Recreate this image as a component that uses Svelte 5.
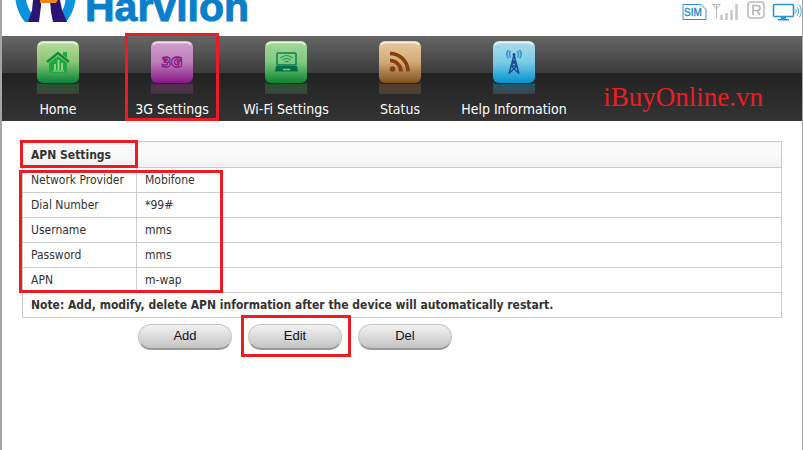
<script>
  const nav = [
    { id: 'home', label: 'Home', top: '#b8de9c', mid: '#8cc576', low: '#07843a' },
    { id: 'network', label: '3G Settings', top: '#d0a0ce', mid: '#bd7fba', low: '#861884', marked: true },
    { id: 'wifi', label: 'Wi-Fi Settings', top: '#a8d898', mid: '#7fc983', low: '#0d8430' },
    { id: 'status', label: 'Status', top: '#e8c9a0', mid: '#d2aa78', low: '#80501c' },
    { id: 'help', label: 'Help Information', top: '#b0dcea', mid: '#7accE6', low: '#0493cc' }
  ];
  const rows = [
    ['Network Provider', 'Mobifone'],
    ['Dial Number', '*99#'],
    ['Username', 'mms'],
    ['Password', 'mms'],
    ['APN', 'm-wap']
  ];
</script>

<div class="page">
  <header>
    <div class="brand">
      <svg width="62" height="22" viewBox="15 0 62 22" aria-hidden="true">
        <path d="M15.500 0C17 9 20 16 25 22H32V14C29 10 27 5 26 0Z" fill="#0a93dc" />
        <path d="M75.500 0C74 9 71 16 66 22H60V14C63 10 65 5 65.500 0Z" fill="#0a93dc" />
        <path d="M33 0H41V6L39 22H28L32 10Z" fill="#2a1574" />
        <path d="M50 0H60L62 10L67 22H53L51 12Z" fill="#2a1574" />
        <path d="M40 0H58L56 3H40Z" fill="#f08220" />
      </svg>
      <span class="name">Harvilon</span>
    </div>
    <svg class="signals" width="120" height="22" viewBox="0 0 120 22" fill="none" role="img" aria-label="Device signals">
      <path d="M1 4.500H19L24 9.500V19.500H1Z" stroke="#2b95d3" />
      <text x="2" y="16" font-size="10" font-family="Liberation Sans" fill="#1b86c8" stroke="#1b86c8" stroke-width=".3">SIM</text>
      <g stroke="#b9b9b9">
        <path d="M30.500 4.500H38.500L34.500 9ZM34.500 4.500V18" />
        <path d="M39.500 15V20M44.500 13V20M49.500 10V20M54.500 4V20" stroke-width="2.500" stroke="#c6c6c6" />
      </g>
      <rect x="66" y="2" width="16" height="16" rx="3" stroke="#bcbcbc" stroke-width="1.600" />
      <path d="M71 15V5.500H75.500Q78 5.500 78 8T75.500 10.500H71M75 10.500L78 15" stroke="#b4b4b4" stroke-width="1.600" />
      <rect x="91.500" y="4.500" width="20" height="12" rx="1" stroke="#2a95d6" stroke-width="1.600" />
      <path d="M99 17H104V19H107V20.500H96V19H99Z" fill="#2a95d6" />
      <path d="M113.500 9Q115 11 113.500 13.500M115.500 7Q118 11 115.500 15.500M117.500 5Q121 11 117.500 17.500" stroke="#4ba6dc" />
    </svg>
  </header>

  <nav>
    <ul>
      {#each nav as n}
        <li>
          <a href="#{n.id}">
            <svg width="44" height="54" viewBox="0 0 44 54" aria-hidden="true">
              <defs>
                <linearGradient id="tile-{n.id}" x2="0" y2="1">
                  <stop stop-color={n.top} />
                  <stop offset=".5" stop-color={n.mid} />
                  <stop offset="1" stop-color={n.low} />
                </linearGradient>
                <linearGradient id="fade-{n.id}" x2="0" y2="1">
                  <stop stop-color={n.low} stop-opacity=".45" />
                  <stop offset="1" stop-color={n.mid} stop-opacity=".15" />
                </linearGradient>
              </defs>
              <path d="M1 42Q2 44 7 44H37Q42 44 43 42V54H1Z" fill="url(#fade-{n.id})" />
              <rect x="1" y="1" width="42" height="42" rx="6" fill="url(#tile-{n.id})" />
              <path d="M3 5Q4 2.500 8 2.500H36Q40 2.500 41 5" fill="none" stroke="#fff" stroke-opacity=".75" stroke-width="1.500" />
              {#if n.id === 'home'}
                <path d="M11 22L22 13L33 22" fill="none" stroke="#128a3c" stroke-width="2.500" />
                <path d="M27 12H31V18L27 15ZM13 23L22 16L31 23V31Q31 33 29 33H15Q13 33 13 31Z" fill="#1fa83f" />
                <path d="M19 30V24M22.500 30V20M26 30V23" stroke="#9ad88a" stroke-width="1.800" />
                <path d="M17 31H28" stroke="#9ad88a" />
              {:else if n.id === 'network'}
                <text x="22" y="27" text-anchor="middle" font-family="DejaVu Sans" font-weight="bold" font-size="14" fill="#c48ac2" stroke="#86187f" stroke-width="1.300">3G</text>
              {:else if n.id === 'wifi'}
                <rect x="13" y="13" width="19" height="12" rx="1" fill="none" stroke="#0a8050" stroke-width="1.500" />
                <path d="M12 26H33L34 31.500H11Z" fill="#04704a" />
                <path d="M19 29.500H26" stroke="#7fc983" stroke-width="1.500" />
                <path d="M16.500 18Q22.500 13 28.500 18M18.500 20Q22.500 17 26.500 20M20.500 22Q22.500 20.500 24.500 22" fill="none" stroke="#1a935a" stroke-width="1.200" />
              {:else if n.id === 'status'}
                <circle cx="14.500" cy="29" r="2.800" fill="#84400c" />
                <path d="M12 20.500A11 11 0 0 1 23 31.500M12 13.500A18 18 0 0 1 30 31.500" fill="none" stroke="#84400c" stroke-width="3.600" />
              {:else}
                <path d="M22 15L17 34M22 15L27 34M20.500 20L25 26L17.500 33M23.500 20L19 26L26.500 33M19 26H25" fill="none" stroke="#174f90" stroke-width="1.500" />
                <circle cx="22" cy="14.500" r="1.500" fill="#174f90" />
                <path d="M18.500 11Q16.500 14 18.500 17.500M25.500 11Q27.500 14 25.500 17.500M16.500 10Q13 14 16.500 18.500M27.500 10Q31 14 27.500 18.500" fill="none" stroke="#3593c8" stroke-width="1.600" />
                <path d="M18 53L22 50L26 53" fill="none" stroke="#174f90" stroke-opacity=".5" />
              {/if}
            </svg>
            <span>{n.label}</span>
          </a>
          {#if n.marked}<i class="frame frame-nav"></i>{/if}
        </li>
      {/each}
    </ul>
    <span class="mark">iBuyOnline.vn</span>
  </nav>

  <main>
    <table>
      <thead>
        <tr><th class="key">APN Settings</th><th></th></tr>
      </thead>
      <tbody>
        {#each rows as [key, value]}
          <tr><td class="key">{key}</td><td>{value}</td></tr>
        {/each}
        <tr><td colspan="2" class="note">Note: Add, modify, delete APN information after the device will automatically restart.</td></tr>
      </tbody>
    </table>
    <i class="frame frame-title"></i>
    <i class="frame frame-rows"></i>
    <div class="actions">
      <button type="button">Add</button>
      <div class="marked">
        <button type="button">Edit</button>
        <i class="frame frame-edit"></i>
      </div>
      <button type="button">Del</button>
    </div>
  </main>
</div>

<style>
  .page {
    box-sizing: border-box;
    min-height: 100vh;
    border-left: 2px solid #a5a5a5;
    border-right: 1px solid #a5a5a5;
    background: #fff;
    color: #333;
    font: 12px/16px 'DejaVu Sans Condensed', 'DejaVu Sans', sans-serif;
  }
  header {
    display: flex;
    justify-content: space-between;
    height: 36px;
    overflow: hidden;
  }
  .brand {
    display: flex;
    gap: 8px;
    padding-left: 13px;
  }
  .name {
    color: #0a7fc9;
    font: bold 41px/14px 'Liberation Sans', sans-serif;
    -webkit-text-stroke: 1px #0a7fc9;
  }
  .signals { flex: none; }

  nav {
    display: flex;
    justify-content: space-between;
    height: 85px;
    background: linear-gradient(#666, #3c3c3c 43%, #222 44%, #333);
  }
  ul {
    display: flex;
    gap: 2px;
    margin: 0;
    padding: 0;
    list-style: none;
  }
  li {
    position: relative;
    width: 112px;
  }
  a {
    display: flex;
    flex-direction: column;
    align-items: center;
    gap: 6px;
    padding-top: 4px;
    color: #fff;
    font-size: 14px;
    line-height: 18px;
    text-decoration: none;
    white-space: nowrap;
  }
  .mark {
    padding: 46px 39px 0 0;
    color: #ed1c24;
    font: 27px/30px 'Liberation Serif', serif;
  }

  main {
    position: relative;
    padding: 20px;
  }
  table {
    width: 100%;
    border-collapse: collapse;
  }
  td, th {
    height: 24px;
    padding: 0 8px;
    border: 1px solid #ccc;
    text-align: left;
  }
  th {
    height: 25px;
    border-color: #ccc transparent #ccc #ccc;
    background: linear-gradient(#fafafa 55%, #eee);
  }
  th:last-child { border-right-color: #ccc; }
  .key {
    width: 97px;
    white-space: nowrap;
  }
  .note { font-weight: bold; }

  .actions {
    display: flex;
    gap: 16px;
    padding: 6px 116px;
  }
  button {
    display: block;
    width: 94px;
    height: 26px;
    padding: 0 0 2px;
    border: 1px solid #c4c4c4;
    border-bottom: 2px solid #999;
    border-radius: 13px;
    background: linear-gradient(#f3f3f3, #c3c3c3);
    color: #112;
    font: 13px/20px 'Liberation Sans', sans-serif;
  }
  .marked { position: relative; }

  .frame {
    position: absolute;
    box-sizing: border-box;
    border: 3px solid #ed1c24;
    pointer-events: none;
  }
  .frame-nav { left: 9px; top: -3px; width: 94px; height: 88px; }
  .frame-title { left: 18px; top: 19px; width: 118px; height: 28px; }
  .frame-rows { left: 17px; top: 49px; width: 204px; height: 123px; }
  .frame-edit { left: -7px; top: -9px; width: 110px; height: 42px; }
</style>
